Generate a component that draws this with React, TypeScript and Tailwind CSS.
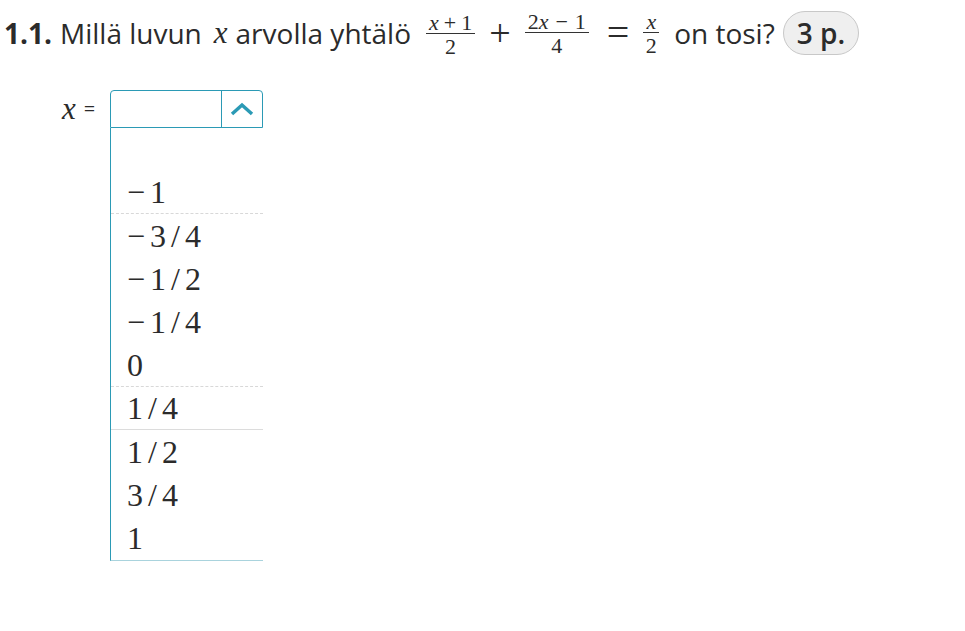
import React from 'react';

const serif = { fontFamily: '"Liberation Serif", "Times New Roman", serif' };

function Frac({ num, den }: { num: React.ReactNode; den: React.ReactNode }) {
  return (
    <span className="inline-flex flex-col items-center align-middle text-[22px] leading-[19px]" style={serif}>
      <span className="border-b border-[#333] px-[3px] pb-[1px]">{num}</span>
      <span className="pt-[3px]">{den}</span>
    </span>
  );
}

const OPTIONS = ['\u22121', '\u22123/4', '\u22121/2', '\u22121/4', '0', '1/4', '1/2', '3/4', '1'];

export default function App() {
  return (
    <div className="min-h-screen bg-white text-[#2b2b2b]" style={{ fontFamily: '"Open Sans", sans-serif' }}>
      <div className="flex h-[58px] items-center pl-[4px] pt-[8px] text-[28px]">
        <span className="mr-[8px] font-bold">1.1.</span>
        <span>Millä luvun</span>
        <i className="ml-[12px] mr-[8px] text-[31px]" style={serif}>x</i>
        <span>arvolla yhtälö</span>
        <span className="ml-[15px]">
          <Frac num={<><i>x</i><span className="mx-[5px]">+</span>1</>} den="2" />
        </span>
        <span className="mx-[14px] text-[38px] leading-none" style={serif}>+</span>
        <Frac num={<>2<i>x</i><span className="mx-[7px]">−</span>1</>} den="4" />
        <span className="ml-[18px] mr-[14px] text-[40px] leading-none" style={serif}>=</span>
        <Frac num={<i>x</i>} den="2" />
        <span className="ml-[15px]">on tosi?</span>
        <span className="ml-[8px] rounded-full border border-[#c8c8c8] bg-[#efefef] px-[13px] py-0 font-semibold">3 p.</span>
      </div>

      <div className="mt-[32px] flex items-start pl-[62px]">
        <div className="flex h-[38px] w-[48px] items-center">
          <i className="text-[31px]" style={serif}>x</i>
          <span className="ml-[8px] text-[20px]">=</span>
        </div>
        <div className="w-[153px]">
          <div className="flex h-[38px] rounded-t-[4px] border border-[#2b9ab5]">
            <div className="flex-1" />
            <div className="flex w-[41px] items-center justify-center border-l border-[#2b9ab5]">
              <svg width="26" height="16" viewBox="0 0 26 16">
                <path d="M3 13 L13 4 L23 13" fill="none" stroke="#2b9ab5" strokeWidth="3.5" />
              </svg>
            </div>
          </div>
          <div className="border-b border-l border-b-[#a9d3dd] border-l-[#2b9ab5] pt-[43px]">
            {OPTIONS.map((o, i) => (
              <div
                key={o}
                className={`flex h-[43.2px] items-center pl-[16px] text-[32px] tracking-[5px] ${i === 0 || i === 4 ? 'border-b border-dashed border-[#d8d8d8]' : i === 5 ? 'border-b border-[#dcdcdc]' : ''}`}
                style={serif}
              >
                {o}
              </div>
            ))}
          </div>
        </div>
      </div>
    </div>
  );
}
